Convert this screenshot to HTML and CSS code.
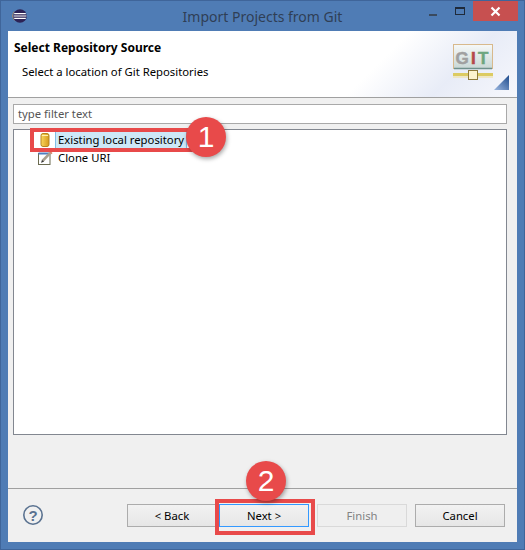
FILE: index.html
```html
<!DOCTYPE html>
<html lang="en">
<head>
    <meta charset="UTF-8">
    <meta name="viewport" content="width=device-width, initial-scale=1.0">
    <title>Import Projects from Git</title>
    <link rel="stylesheet" href="styles.css">
</head>
<body>
    <div class="window">
        <div class="titlebar">
            <svg class="app-icon" width="16" height="16" viewBox="0 0 16 16">
                <circle cx="8" cy="8" r="6.8" fill="#2c2255"/>
                <path d="M3 2.6A7 7 0 0 0 3 13.4A8 8 0 0 1 3 2.6Z" fill="#f7941e"/>
                <path d="M2.2 5.6H13.8M1.6 8H14.4M2.2 10.4H13.8" stroke="#fff" stroke-width="1.2"/>
            </svg>
            <span class="title">Import Projects from Git</span>
            <div class="window-buttons">
                <span class="btn-min"></span>
                <span class="btn-max"></span>
                <span class="btn-close">
                    <svg width="11" height="11" viewBox="0 0 11 11">
                        <path d="M1.5 1.5L9.5 9.5M9.5 1.5L1.5 9.5" stroke="#fff" stroke-width="2.2"/>
                    </svg>
                </span>
            </div>
        </div>

        <div class="client">
            <div class="banner">
                <div class="banner-text">
                    <h1>Select Repository Source</h1>
                    <p>Select a location of Git Repositories</p>
                </div>
                <svg class="git-icon" width="58" height="50" viewBox="0 0 58 50">
                    <defs>
                        <linearGradient id="screen" x1="0" y1="0" x2="0" y2="1">
                            <stop offset="0" stop-color="#f6f8f8"/>
                            <stop offset="1" stop-color="#c9d8d6"/>
                        </linearGradient>
                        <linearGradient id="corner" x1="0" y1="1" x2="1" y2="0">
                            <stop offset="0" stop-color="#9db8e0"/>
                            <stop offset="1" stop-color="#1d4a8c"/>
                        </linearGradient>
                    </defs>
                    <rect x="2.5" y="2.5" width="39" height="24" fill="url(#screen)" stroke="#d8b98c"/>
                    <path d="M3 26.5H41" stroke="#6f918c" stroke-width="1.5"/>
                    <text x="4.5" y="21.5" class="git-letter" fill="#a0a0a0" stroke="#a0a0a0">G</text>
                    <text x="20" y="21.5" class="git-letter" fill="#b5474c" stroke="#b5474c">I</text>
                    <text x="27" y="21.5" class="git-letter" fill="#6da67f" stroke="#6da67f">T</text>
                    <rect x="2" y="31" width="40" height="3" fill="#dccb62"/>
                    <path d="M2 35H42" stroke="#eee3b5" stroke-width="1.5"/>
                    <rect x="17.5" y="28.5" width="9" height="9" fill="#fdf3cf" stroke="#8f7a3a"/>
                    <path d="M43 48H58V33Z" fill="url(#corner)"/>
                </svg>
            </div>

            <div class="content">
                <div class="filter">type filter text</div>
                <div class="tree">
                    <div class="tree-row">
                        <svg class="tree-icon" width="16" height="16" viewBox="0 0 16 16">
                            <defs>
                                <linearGradient id="repo" x1="0" y1="0" x2="1" y2="0">
                                    <stop offset="0" stop-color="#f9d65c"/>
                                    <stop offset="1" stop-color="#d69a1c"/>
                                </linearGradient>
                            </defs>
                            <rect x="4" y="1.5" width="8" height="13" rx="2" fill="url(#repo)" stroke="#b58420"/>
                            <path d="M5 3.5H11" stroke="#fff0b0"/>
                        </svg>
                        <span class="tree-label selected">Existing local repository</span>
                    </div>
                    <div class="tree-row">
                        <svg class="tree-icon" width="16" height="16" viewBox="0 0 16 16">
                            <rect x="1.5" y="3.5" width="11.5" height="11" fill="#fff" stroke="#6b6b50"/>
                            <path d="M1.5 3.5H13" stroke="#4f7fc0" stroke-width="2"/>
                            <path d="M5.5 11L13 3.2" stroke="#a8a090" stroke-width="2.6"/>
                            <path d="M4 12.8L5 10L7 11.8Z" fill="#333"/>
                            <path d="M12.8 1.6L15 3.6" stroke="#d9846a" stroke-width="1.6"/>
                        </svg>
                        <span class="tree-label">Clone URI</span>
                    </div>
                </div>
            </div>

            <div class="footer">
                <svg class="help" width="22" height="22" viewBox="0 0 22 22">
                    <circle cx="11" cy="11" r="9.2" fill="none" stroke="#5a7290" stroke-width="1.6"/>
                    <text x="11" y="16.5" class="help-mark">?</text>
                </svg>
                <div class="buttons">
                    <button class="button">&lt; Back</button>
                    <button class="button button-default">Next &gt;</button>
                    <button class="button button-next-gap" disabled>Finish</button>
                    <button class="button">Cancel</button>
                </div>
            </div>
        </div>

        <div class="mark-box mark-box-one"></div>
        <div class="mark-circle mark-circle-one">1</div>
        <div class="mark-box mark-box-two"></div>
        <div class="mark-circle mark-circle-two">2</div>
    </div>
</body>
</html>
```

FILE: styles.css
```css
body, html {
    margin: 0;
    padding: 0;
    height: 100%;
    font-family: "Noto Sans", Arial, sans-serif;
    font-size: 11.3px;
    color: #000;
}

.window {
    position: relative;
    width: 525px;
    height: 550px;
    box-sizing: border-box;
    display: flex;
    flex-direction: column;
    background-color: #4f7cb5;
    border: 1px solid #3f659a;
    overflow: hidden;
}

.titlebar {
    height: 30px;
    flex: none;
    display: flex;
    align-items: center;
    position: relative;
    padding-left: 11px;
}

.app-icon {
    margin-top: -1px;
}

.title {
    position: absolute;
    left: 0;
    right: 0;
    top: 6px;
    text-align: center;
    font-size: 14px;
    line-height: 20px;
    color: #2f3f55;
}

.window-buttons {
    position: absolute;
    top: 0;
    right: 6px;
    display: flex;
    align-items: flex-start;
}

.btn-min {
    width: 8px;
    height: 2px;
    margin: 13px 18px 0 0;
    background-color: #3a4a5e;
}

.btn-max {
    width: 8px;
    height: 5px;
    margin: 6px 8px 0 0;
    border: 1px solid #1f2a3a;
    border-top-width: 2px;
}

.btn-close {
    width: 45px;
    height: 20px;
    display: flex;
    align-items: center;
    justify-content: center;
    background-color: #c75050;
}

.client {
    flex: none;
    width: 509px;
    height: 511px;
    margin-left: 7px;
    display: flex;
    flex-direction: column;
    background-color: #f0f0f0;
}

.banner {
    height: 66px;
    flex: none;
    display: flex;
    justify-content: space-between;
    background: linear-gradient(135deg, #fff 70%, #e8ecf7 85%, #f6f7fc 100%);
    border-bottom: 1px solid #a0a0a0;
}

.banner-text h1 {
    margin: 9px 0 0 6px;
    font-size: 12px;
    line-height: 16px;
    font-weight: 700;
}

.banner-text p {
    margin: 8px 0 0 14px;
    line-height: 16px;
}

.git-icon {
    margin: 11px 8px 0 0;
}

.git-letter {
    font-family: "Liberation Sans", Arial, sans-serif;
    font-size: 17px;
    font-weight: 700;
    stroke-width: 0.5px;
}

.content {
    height: 391px;
    flex: none;
    box-sizing: border-box;
    padding: 6px 10px 0 5px;
    border-bottom: 1px solid #a0a0a0;
}

.filter {
    height: 20px;
    box-sizing: border-box;
    padding: 0 4px;
    line-height: 17px;
    color: #555;
    background-color: #fff;
    border: 1px solid #a9a9a9;
}

.tree {
    height: 306px;
    box-sizing: border-box;
    margin-top: 5px;
    padding: 0 0 0 23px;
    background-color: #fff;
    border: 1px solid #828790;
}

.tree-row {
    height: 19px;
    display: flex;
    align-items: center;
}

.tree-row + .tree-row {
    height: 17px;
}

.tree-icon {
    flex: none;
    margin-right: 2px;
}

.tree-label {
    padding: 0 2px;
    margin-left: 1px;
    line-height: 17px;
}

.selected {
    background-color: #cde8f7;
    border: 1px solid #7fbfe6;
    margin-left: 0;
}

.footer {
    flex: 1;
    display: flex;
    align-items: flex-start;
    justify-content: space-between;
    padding: 15px 12px 0 14px;
}

.help-mark {
    font-family: "Liberation Sans", Arial, sans-serif;
    font-size: 15px;
    font-weight: 700;
    text-anchor: middle;
    fill: #5a7290;
}

.buttons {
    display: flex;
    gap: 2px;
}

.button {
    width: 90px;
    height: 23px;
    padding: 0;
    font-family: inherit;
    font-size: 11.3px;
    color: #000;
    background: linear-gradient(#f2f2f2, #e6e6e6);
    border: 1px solid #acacac;
}

.button-default {
    border-color: #3399ff;
}

.button-next-gap {
    margin: 0 6px;
}

.button:disabled {
    color: #838383;
    background: #efefef;
    border-color: #d9d9d9;
}

.mark-box {
    position: absolute;
    box-sizing: border-box;
    border: 4px solid #e84a4a;
}

.mark-box-one {
    left: 29px;
    top: 127px;
    width: 170px;
    height: 24px;
}

.mark-box-two {
    left: 214px;
    top: 498px;
    width: 100px;
    height: 36px;
}

.mark-circle {
    position: absolute;
    width: 40px;
    height: 40px;
    border-radius: 50%;
    display: flex;
    align-items: center;
    justify-content: center;
    font-family: "Liberation Sans", Arial, sans-serif;
    font-size: 30px;
    color: #fff;
    background-color: #e84a4a;
    box-shadow: 1px 2px 4px rgba(0, 0, 0, 0.35);
}

.mark-circle-one {
    left: 185px;
    top: 116px;
}

.mark-circle-two {
    left: 245px;
    top: 460px;
}
```
